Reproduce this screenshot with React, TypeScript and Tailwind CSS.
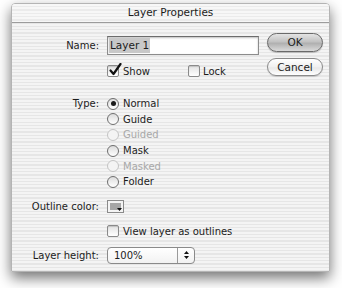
import type { ReactNode } from 'react'

const stripes =
  'bg-[repeating-linear-gradient(180deg,#f4f4f4_0px,#f4f4f4_2px,#e6e6e6_2px,#e6e6e6_3.3px)]'

function Checkbox({ checked }: { checked?: boolean }) {
  return (
    <span className="relative inline-block w-[12px] h-[12px] rounded-[2px] border border-[#8a8a8a] bg-[linear-gradient(180deg,#e2e2e2,#ffffff)] shadow-[inset_0_1px_1px_rgba(0,0,0,0.15)]">
      {checked && (
        <svg className="absolute left-[1px] top-[-3px]" width="13" height="13" viewBox="0 0 13 13">
          <path d="M1.5 7.5 L4.5 11 L11.5 1" fill="none" stroke="#111" strokeWidth="2.2" strokeLinecap="round" strokeLinejoin="round" />
        </svg>
      )}
    </span>
  )
}

function Radio({ on, disabled }: { on?: boolean; disabled?: boolean }) {
  return (
    <span
      className={`flex items-center justify-center w-[12px] h-[12px] rounded-full border ${
        disabled ? 'border-[#c4c4c4] bg-[#f4f4f4]' : 'border-[#6e6e6e] bg-[linear-gradient(180deg,#dcdcdc,#ffffff)]'
      }`}
    >
      {on && <span className="w-[5px] h-[5px] rounded-full bg-[#1a1a1a]" />}
    </span>
  )
}

function Row({ label, className, children }: { label?: string; className: string; children: ReactNode }) {
  return (
    <div className={`flex items-center ${className}`}>
      <span className="w-[87px] shrink-0 text-right">{label}</span>
      <div className="ml-[8px] flex items-center">{children}</div>
    </div>
  )
}

const types = [
  { name: 'Normal', on: true },
  { name: 'Guide' },
  { name: 'Guided', disabled: true },
  { name: 'Mask' },
  { name: 'Masked', disabled: true },
  { name: 'Folder' },
]

export default function App() {
  return (
    <div className="w-[342px] h-[288px] bg-white pt-[3px] pl-[11px] font-['DejaVu_Sans',sans-serif] text-[10px] text-[#1c1c1c]">
      <div className={`w-[319px] h-[269px] rounded-t-[4px] border border-[#b4b4b4] ${stripes} shadow-[0_6px_14px_rgba(0,0,0,0.55)] flex flex-col overflow-hidden`}>
        <div className="h-[19px] shrink-0 flex items-center justify-center border-b border-[#9c9c9c] text-[10.5px] bg-[repeating-linear-gradient(180deg,#f7f7f7_0px,#f7f7f7_2px,#ebebeb_2px,#ebebeb_3.3px)]">
          Layer Properties
        </div>
        <div className="flex">
          <div className="w-[246px] flex flex-col">
            <Row label="Name:" className="mt-[13px] h-[19px]">
              <div className="w-[152px] h-[19px] border border-[#8c8c8c] border-t-[#6c6c6c] bg-white shadow-[inset_0_1px_2px_rgba(0,0,0,0.25)] flex items-center px-[1px]">
                <span className="bg-[#c8c8c8] h-[15px] leading-[15px] px-[1px] whitespace-nowrap text-[10.5px]">Layer 1</span>
              </div>
            </Row>
            <Row className="mt-[9px] h-[14px]">
              <div className="w-[81px] flex items-center">
                <Checkbox checked />
                <span className="ml-[4px]">Show</span>
              </div>
              <div className="flex items-center">
                <Checkbox />
                <span className="ml-[3px]">Lock</span>
              </div>
            </Row>
            <div className="mt-[18px] flex">
              <span className="w-[87px] shrink-0 text-right h-[15.6px] leading-[15.6px]">Type:</span>
              <div className="ml-[8px] flex flex-col">
                {types.map((t) => (
                  <div key={t.name} className="flex items-center h-[15.6px]">
                    <Radio on={t.on} disabled={t.disabled} />
                    <span className={`ml-[4px] ${t.disabled ? 'text-[#a8a8a8]' : ''}`}>{t.name}</span>
                  </div>
                ))}
              </div>
            </div>
            <Row label="Outline color:" className="mt-[10px] h-[13px]">
              <div className="relative w-[17px] h-[13px] border border-[#8a8a8a] bg-[#f4f4f4] p-[2px]">
                <div className="w-full h-full bg-[#a6a6a6]" />
                <svg className="absolute right-[1px] bottom-[1px]" width="5" height="3" viewBox="0 0 5 3">
                  <path d="M0 0 H5 L2.5 3 Z" fill="#111" />
                </svg>
              </div>
            </Row>
            <Row className="mt-[12px] h-[13px]">
              <Checkbox />
              <span className="ml-[4px]">View layer as outlines</span>
            </Row>
            <Row label="Layer height:" className="mt-[9px] h-[17px]">
              <div className="w-[88px] h-[17px] rounded-[4px] border border-[#8a8a8a] bg-[linear-gradient(180deg,#ffffff,#f2f2f2)] flex items-center">
                <span className="flex-1 pl-[6px]">100%</span>
                <div className="w-[17px] h-full border-l border-[#9a9a9a] flex flex-col items-center justify-center gap-[2px]">
                  <svg width="5" height="3" viewBox="0 0 5 3">
                    <path d="M0 3 H5 L2.5 0 Z" fill="#111" />
                  </svg>
                  <svg width="5" height="3" viewBox="0 0 5 3">
                    <path d="M0 0 H5 L2.5 3 Z" fill="#111" />
                  </svg>
                </div>
              </div>
            </Row>
          </div>
          <div className="ml-[9px] flex flex-col">
            <button className="mt-[10px] w-[56px] h-[19px] rounded-full border border-[#6a6a6a] bg-[linear-gradient(180deg,#e4e4e4_0%,#c2c2c2_45%,#b0b0b0_55%,#dadada_100%)] shadow-[0_1px_1px_rgba(0,0,0,0.2)] text-[10.5px] leading-none">
              OK
            </button>
            <button className="mt-[6px] w-[56px] h-[18px] rounded-full border border-[#8a8a8a] bg-[linear-gradient(180deg,#ffffff_0%,#f0f0f0_50%,#e8e8e8_55%,#ffffff_100%)] shadow-[0_1px_1px_rgba(0,0,0,0.15)] text-[10.5px] leading-none">
              Cancel
            </button>
          </div>
        </div>
      </div>
    </div>
  )
}
